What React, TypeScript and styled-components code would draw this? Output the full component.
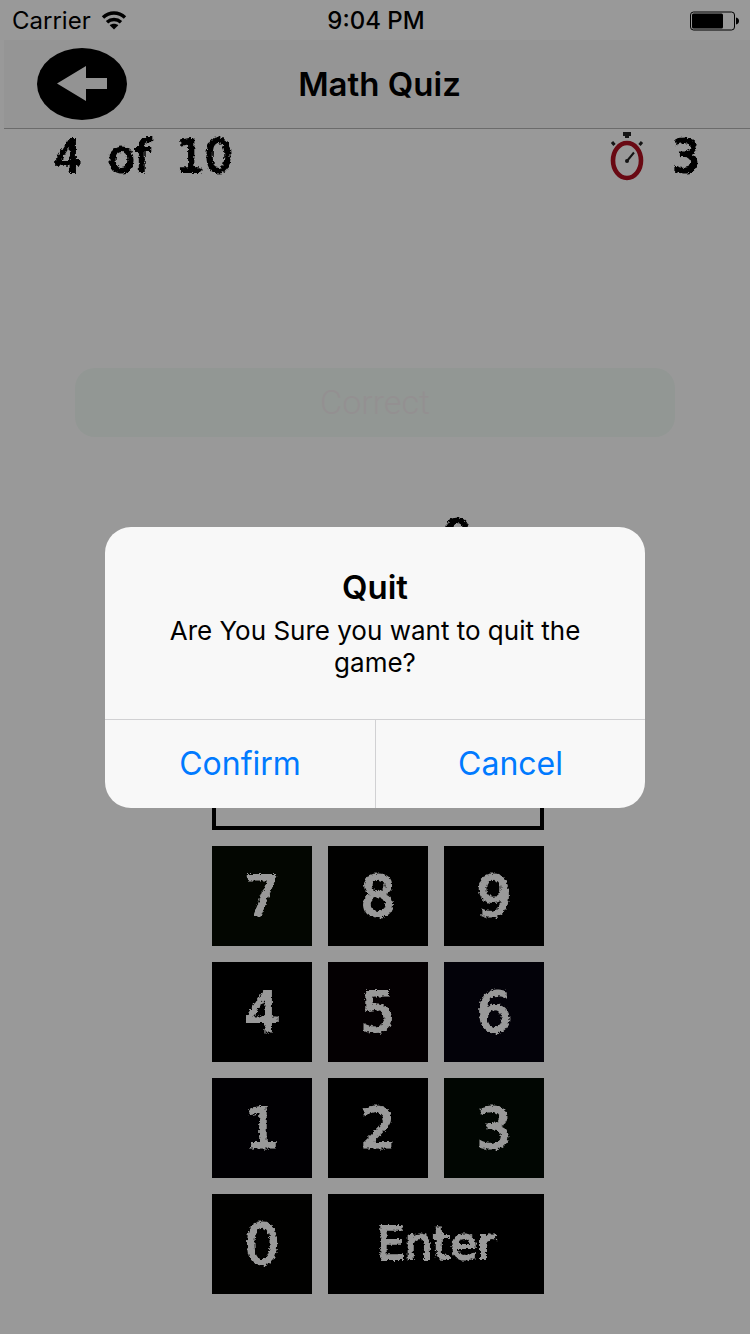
import React, { useState } from "react";
import styled, { createGlobalStyle } from "styled-components";

const GlobalStyle = createGlobalStyle`
  *, *::before, *::after { box-sizing: border-box; }
  body { margin: 0; background: #fff; color: #000; font-family: Inter, "Liberation Sans", sans-serif; }
  h1, h2, p { margin: 0; }
  button, input { font: inherit; color: inherit; }
`;

const Screen = styled.div`
  position: relative;
  display: flex;
  flex-direction: column;
  min-height: 100vh;
`;

const StatusBar = styled.header`
  display: grid;
  grid-template-columns: 1fr auto 1fr;
  align-items: center;
  height: 40px;
  padding: 2px 10px 0 12px;
  font-size: 24px;
  line-height: 32px;
`;

const Carrier = styled.div`
  display: flex;
  align-items: center;
  gap: 10px;
`;

const Clock = styled.time`
  font-weight: 500;
`;

const BatteryIcon = styled.svg`
  justify-self: end;
`;

const NavBar = styled.nav`
  display: grid;
  grid-template-columns: 1fr auto 1fr;
  align-items: center;
  height: 89px;
  margin-left: 4px;
  padding: 0 28px 0 33px;
  background: #f8f8f8;
  border-bottom: 1px solid #b2b2b2;
`;

const BackButton = styled.button`
  display: flex;
  justify-self: start;
  padding: 0;
  border: 0;
  background: none;
`;

const NavTitle = styled.h1`
  font-size: 33px;
  line-height: 40px;
  font-weight: 600;
`;

const ChalkText = styled.span<{ $size: number }>`
  font-family: Chalkduster, "DejaVu Sans", sans-serif;
  font-size: ${(p) => p.$size}px;
  line-height: 64px;
  -webkit-text-stroke: 2px currentColor;
  filter: url(#chalk);
`;

const ScoreRow = styled.div`
  display: flex;
  align-items: center;
  justify-content: space-between;
  height: 56px;
  padding: 0 50px 0 54px;
`;

const Progress = styled.div`
  display: flex;
  gap: 26px;
`;

const Timer = styled.div`
  display: flex;
  align-items: center;
  gap: 28px;
`;

const Feedback = styled.p`
  margin: 183px 75px 0;
  border-radius: 20px;
  background: #f4fcf7;
  color: #f6f0f2;
  font-family: Roboto, sans-serif;
  font-size: 34px;
  font-weight: 300;
  line-height: 69px;
  text-align: center;
`;

const Question = styled.div`
  display: flex;
  justify-content: center;
  margin-top: 68px;
  padding-left: 166px;
`;

const Keypad = styled.div`
  display: grid;
  grid-template-columns: repeat(3, 100px);
  grid-auto-rows: 100px;
  justify-content: center;
  gap: 16px;
  margin-top: auto;
  padding: 0 0 40px 6px;
`;

const Answer = styled.input`
  grid-column: span 3;
  align-self: end;
  width: 100%;
  height: 80px;
  border: 4px solid #000;
  border-radius: 0;
  background: #fff;
`;

const Key = styled.button<{ $tint?: string; $wide?: boolean }>`
  grid-column: span ${(p) => (p.$wide ? 2 : 1)};
  padding: 0;
  border: 0;
  background: ${(p) => p.$tint ?? "#000"};
  color: #fff;
`;

const Scrim = styled.div`
  position: absolute;
  inset: 0;
  display: flex;
  align-items: center;
  justify-content: center;
  background: rgba(0, 0, 0, 0.4);
`;

const Alert = styled.section`
  width: 90%;
  max-width: 540px;
  overflow: hidden;
  border-radius: 26px;
  background: #f8f8f8;
  text-align: center;
`;

const AlertBody = styled.div`
  padding: 40px;
`;

const AlertTitle = styled.h2`
  margin-bottom: 8px;
  font-size: 33px;
  line-height: 40px;
  font-weight: 600;
`;

const AlertMessage = styled.p`
  font-size: 26px;
  line-height: 32px;
`;

const AlertActions = styled.div`
  display: grid;
  grid-template-columns: 1fr 1fr;
  border-top: 1px solid #d1d1d3;
`;

const AlertButton = styled.button`
  height: 88px;
  padding: 0;
  border: 0;
  background: none;
  color: #007aff;
  font-size: 32px;

  & + & { border-left: 1px solid #d1d1d3; }
`;

const keys = [
  { label: "7", tint: "#050a02" },
  { label: "8", tint: "#030300" },
  { label: "9", tint: "#030303" },
  { label: "4", tint: "#000000" },
  { label: "5", tint: "#080004" },
  { label: "6", tint: "#06040f" },
  { label: "1", tint: "#030006" },
  { label: "2", tint: "#000000" },
  { label: "3", tint: "#020a04" },
  { label: "0", tint: "#030300" },
];

function ChalkFilter() {
  return (
    <svg width="0" height="0" style={{ position: "absolute" }} aria-hidden="true">
      <filter id="chalk" x="-10%" y="-10%" width="120%" height="120%">
        <feTurbulence type="fractalNoise" baseFrequency="0.35" numOctaves="2" seed="4" result="grain" />
        <feDisplacementMap in="SourceGraphic" in2="grain" scale="5" xChannelSelector="R" yChannelSelector="G" />
      </filter>
    </svg>
  );
}

function WifiIcon() {
  return (
    <svg width="26" height="20" viewBox="0 0 26 20" fill="none" stroke="#000" strokeWidth="3.5" aria-label="Wi-Fi">
      <path d="M2 6.500C8.500 0.600 17.500 0.600 24 6.500" />
      <path d="M6 11.300C10 7.700 16 7.700 20 11.300" />
      <path d="M13 18.500 8.700 14.300C11 12.300 15 12.300 17.300 14.300Z" fill="#000" stroke="none" />
    </svg>
  );
}

function Battery() {
  return (
    <BatteryIcon width="50" height="20" viewBox="0 0 50 20" aria-label="Battery">
      <rect x="0.500" y="1" width="44" height="18" rx="3" fill="none" stroke="#000" />
      <rect x="2" y="2.500" width="31" height="15" rx="1.500" />
      <path d="M46 6.500C50 7 50 13 46 13.500Z" />
    </BatteryIcon>
  );
}

function BackIcon() {
  return (
    <svg width="90" height="72" viewBox="0 0 90 72" aria-hidden="true">
      <ellipse cx="45" cy="36" rx="45" ry="36" />
      <path d="M20 35.500 49 18V30H70V41H49V53Z" fill="#f6f6f6" />
    </svg>
  );
}

function Stopwatch() {
  return (
    <svg width="34" height="50" viewBox="0 0 34 50" aria-label="Timer">
      <path d="M13 0h8v4h-2v2h-4V4h-2Z" fill="#222" />
      <path d="M2 10 4.500 13M32 10 29.500 13" stroke="#222" strokeWidth="3" />
      <ellipse cx="17" cy="28.500" rx="14" ry="17.500" fill="none" stroke="#b01020" strokeWidth="4.600" />
      <path d="M17 29 24 20.500" stroke="#222" strokeWidth="2" />
      <circle cx="17" cy="29" r="2" fill="#222" />
    </svg>
  );
}

export default function App() {
  const [open, setOpen] = useState(true);

  return (
    <Screen>
      <GlobalStyle />
      <ChalkFilter />
      <StatusBar>
        <Carrier>
          Carrier
          <WifiIcon />
        </Carrier>
        <Clock>9:04 PM</Clock>
        <Battery />
      </StatusBar>
      <NavBar>
        <BackButton type="button" aria-label="Back">
          <BackIcon />
        </BackButton>
        <NavTitle>Math Quiz</NavTitle>
      </NavBar>
      <ScoreRow>
        <Progress>
          <ChalkText $size={44}>4</ChalkText> <ChalkText $size={44}>of</ChalkText>{" "}
          <ChalkText $size={44}>10</ChalkText>
        </Progress>
        <Timer>
          <Stopwatch />
          <ChalkText $size={44}>3</ChalkText>
        </Timer>
      </ScoreRow>
      <Feedback>Correct</Feedback>
      <Question>
        <ChalkText $size={44}>9</ChalkText>
      </Question>
      <Keypad>
        <Answer type="text" readOnly aria-label="Answer" />
        {keys.map((k) => (
          <Key key={k.label} type="button" $tint={k.tint}>
            <ChalkText $size={56}>{k.label}</ChalkText>
          </Key>
        ))}
        <Key type="button" $wide>
          <ChalkText $size={44}>Enter</ChalkText>
        </Key>
      </Keypad>
      {open && (
        <Scrim>
          <Alert role="alertdialog" aria-labelledby="quit-title" aria-describedby="quit-message">
            <AlertBody>
              <AlertTitle id="quit-title">Quit</AlertTitle>
              <AlertMessage id="quit-message">Are You Sure you want to quit the game?</AlertMessage>
            </AlertBody>
            <AlertActions>
              <AlertButton type="button" onClick={() => setOpen(false)}>Confirm</AlertButton>
              <AlertButton type="button" onClick={() => setOpen(false)}>Cancel</AlertButton>
            </AlertActions>
          </Alert>
        </Scrim>
      )}
    </Screen>
  );
}
